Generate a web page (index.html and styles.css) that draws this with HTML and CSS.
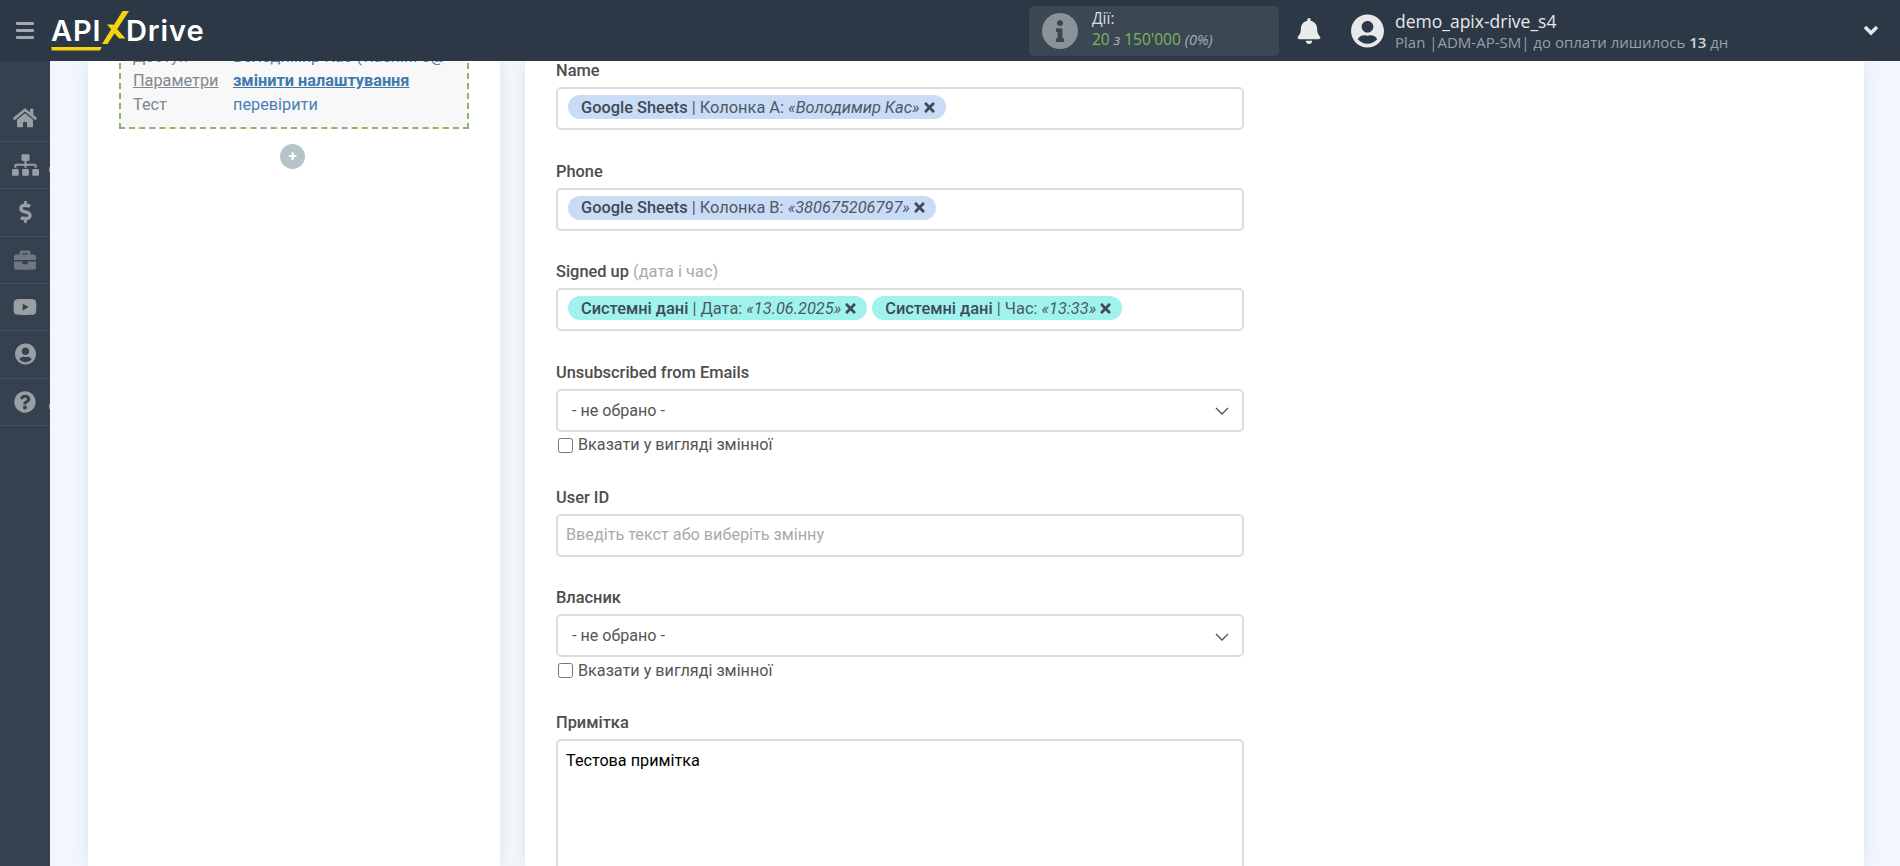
FILE: index.html
```html
<!DOCTYPE html>
<html lang="uk">
<head>
<meta charset="utf-8">
<title>ApiX-Drive</title>
<link rel="stylesheet" href="styles.css">
</head>
<body>
<svg class="defs" width="0" height="0" aria-hidden="true">
  <symbol id="i-home" viewBox="0 0 576 512"><path d="M280.37 148.26L96 300.11V464a16 16 0 0 0 16 16l112.06-.29a16 16 0 0 0 15.92-16V368a16 16 0 0 1 16-16h64a16 16 0 0 1 16 16v95.64a16 16 0 0 0 16 16.05L464 480a16 16 0 0 0 16-16V300L295.67 148.26a12.19 12.19 0 0 0-15.3 0zM571.6 251.47L488 182.56V44.05a12 12 0 0 0-12-12h-56a12 12 0 0 0-12 12v72.61L318.47 43a48 48 0 0 0-61 0L4.34 251.47a12 12 0 0 0-1.6 16.9l25.5 31A12 12 0 0 0 45.15 301l235.22-193.74a12.19 12.19 0 0 1 15.3 0L530.9 301a12 12 0 0 0 16.9-1.6l25.5-31a12 12 0 0 0-1.7-16.93z"/></symbol>
  <symbol id="i-sitemap" viewBox="0 0 640 512"><path d="M128 352H32c-17.67 0-32 14.33-32 32v96c0 17.67 14.33 32 32 32h96c17.67 0 32-14.33 32-32v-96c0-17.67-14.33-32-32-32zm-24-80h192v48h48v-48h192v48h48v-57.59c0-21.17-17.23-38.41-38.41-38.41H344v-64h40c17.67 0 32-14.33 32-32V32c0-17.67-14.33-32-32-32H256c-17.67 0-32 14.33-32 32v96c0 17.67 14.33 32 32 32h40v64H94.41C73.23 224 56 241.23 56 262.41V320h48v-48zm264 80h-96c-17.67 0-32 14.33-32 32v96c0 17.67 14.33 32 32 32h96c17.67 0 32-14.33 32-32v-96c0-17.67-14.33-32-32-32zm240 0h-96c-17.67 0-32 14.33-32 32v96c0 17.67 14.33 32 32 32h96c17.67 0 32-14.33 32-32v-96c0-17.67-14.33-32-32-32z"/></symbol>
  <symbol id="i-dollar" viewBox="0 0 288 512"><path d="M209.2 233.4l-108-31.6C88.7 198.2 80 186.5 80 173.5c0-16.3 13.2-29.5 29.5-29.5h66.3c12.2 0 24.2 3.7 34.2 10.5 6.1 4.1 14.3 3.1 19.5-2l34.8-34c7.1-6.9 6.1-18.4-1.8-24.5C238 74.8 207.4 64.1 176 64V16c0-8.8-7.2-16-16-16h-32c-8.8 0-16 7.2-16 16v48h-2.5C45.8 64-5.4 118.7.5 183.6c4.2 46.1 39.4 83.6 83.8 96.6l102.5 30c12.5 3.7 21.2 15.3 21.2 28.3 0 16.3-13.2 29.5-29.5 29.5h-66.3C100 368 88 364.3 78 357.5c-6.1-4.1-14.3-3.1-19.5 2l-34.8 34c-7.1 6.9-6.1 18.4 1.8 24.5 24.5 19.2 55.1 29.9 86.5 30v48c0 8.8 7.2 16 16 16h32c8.8 0 16-7.2 16-16v-48.2c46.6-.9 90.3-28.6 105.7-72.7 21.5-61.6-14.6-124.8-72.5-141.7z"/></symbol>
  <symbol id="i-briefcase" viewBox="0 0 512 512"><path d="M320 336c0 8.84-7.16 16-16 16h-96c-8.84 0-16-7.16-16-16v-48H0v144c0 25.6 22.4 48 48 48h416c25.6 0 48-22.4 48-48V288H320v48zm144-208h-80V80c0-25.6-22.4-48-48-48H176c-25.6 0-48 22.4-48 48v48H48c-25.6 0-48 22.4-48 48v80h512v-80c0-25.6-22.4-48-48-48zm-144 0H192V96h128v32z"/></symbol>
  <symbol id="i-youtube" viewBox="0 0 576 512"><path d="M549.655 124.083c-6.281-23.65-24.787-42.276-48.284-48.597C458.781 64 288 64 288 64S117.22 64 74.629 75.486c-23.497 6.322-42.003 24.947-48.284 48.597-11.412 42.867-11.412 132.305-11.412 132.305s0 89.438 11.412 132.305c6.281 23.65 24.787 41.5 48.284 47.821C117.22 448 288 448 288 448s170.78 0 213.371-11.486c23.497-6.321 42.003-24.171 48.284-47.821 11.412-42.867 11.412-132.305 11.412-132.305s0-89.438-11.412-132.305zm-317.51 213.508V175.185l142.739 81.205-142.739 81.201z"/></symbol>
  <symbol id="i-user" viewBox="0 0 496 512"><path d="M248 8C111 8 0 119 0 256s111 248 248 248 248-111 248-248S385 8 248 8zm0 96c48.6 0 88 39.4 88 88s-39.4 88-88 88-88-39.4-88-88 39.4-88 88-88zm0 344c-58.7 0-111.3-26.6-146.5-68.2 18.8-35.4 55.6-59.8 98.5-59.8 2.4 0 4.8.4 7.1 1.1 13 4.2 26.6 6.9 40.9 6.9 14.3 0 28-2.7 40.9-6.9 2.3-.7 4.7-1.1 7.1-1.1 42.9 0 79.7 24.4 98.5 59.8C359.3 421.4 306.7 448 248 448z"/></symbol>
  <symbol id="i-help" viewBox="0 0 512 512"><path d="M504 256c0 136.997-111.043 248-248 248S8 392.997 8 256C8 119.083 119.043 8 256 8s248 111.083 248 248zM262.655 90c-54.497 0-89.255 22.957-116.549 63.758-3.536 5.286-2.353 12.415 2.715 16.258l34.699 26.31c5.205 3.947 12.621 3.008 16.665-2.122 17.864-22.658 30.113-35.797 57.303-35.797 20.429 0 45.698 13.148 45.698 32.958 0 14.976-12.363 22.667-32.534 33.976C247.128 238.528 216 254.941 216 296v4c0 6.627 5.373 12 12 12h56c6.627 0 12-5.373 12-12v-1.333c0-28.462 83.186-29.647 83.186-106.667 0-58.002-60.165-102-116.531-102zM256 338c-25.365 0-46 20.635-46 46 0 25.364 20.635 46 46 46s46-20.636 46-46c0-25.365-20.635-46-46-46z"/></symbol>
  <symbol id="i-bell" viewBox="0 0 448 512"><path d="M224 512c35.32 0 63.97-28.65 63.97-64H160.03c0 35.35 28.65 64 63.97 64zm215.39-149.71c-19.32-20.76-55.47-51.99-55.47-154.29 0-77.7-54.48-139.9-127.94-155.16V32c0-17.67-14.32-32-31.98-32s-31.98 14.33-31.98 32v20.84C118.56 68.1 64.08 130.3 64.08 208c0 102.3-36.15 133.53-55.47 154.29-6 6.45-8.66 14.16-8.61 21.71.11 16.4 12.98 32 32.1 32h383.8c19.12 0 32-15.6 32.1-32 .05-7.55-2.61-15.27-8.61-21.71z"/></symbol>
  <symbol id="i-info" viewBox="0 0 192 512"><path d="M20 424.229h20V279.771H20c-11.046 0-20-8.954-20-20V212c0-11.046 8.954-20 20-20h112c11.046 0 20 8.954 20 20v212.229h20c11.046 0 20 8.954 20 20V492c0 11.046-8.954 20-20 20H20c-11.046 0-20-8.954-20-20v-47.771c0-11.046 8.954-20 20-20zM96 0C56.235 0 24 32.235 24 72s32.235 72 72 72 72-32.235 72-72S135.764 0 96 0z"/></symbol>
  <symbol id="i-times" viewBox="0 0 352 512"><path d="M242.72 256l100.07-100.07c12.28-12.28 12.28-32.19 0-44.48l-22.24-22.24c-12.28-12.28-32.19-12.28-44.48 0L176 189.28 75.93 89.21c-12.28-12.28-32.19-12.28-44.48 0L9.21 111.45c-12.28 12.28-12.28 32.19 0 44.48L109.28 256 9.21 356.07c-12.28 12.28-12.28 32.19 0 44.48l22.24 22.24c12.28 12.28 32.2 12.28 44.48 0L176 322.72l100.07 100.07c12.28 12.28 32.2 12.28 44.48 0l22.24-22.24c12.28-12.28 12.28-32.19 0-44.48L242.72 256z"/></symbol>
</svg>

<header class="topbar">
  <div class="burger"><span></span><span></span><span></span></div>
  <div class="logo">
    <span class="logo-api">API</span>
    <svg class="logo-x" viewBox="0 0 30 38" width="30" height="38"><path d="M20.5 2H27L5.5 35H0zM5 15.500h6L23.500 29.500H17z"/></svg>
    <span class="logo-drive">Drive</span>
  </div>
  <div class="actions">
    <div class="info-badge"><svg class="info-glyph"><use href="#i-info"/></svg></div>
    <div class="actions-text">
      <div class="actions-title">Дії:</div>
      <div class="actions-count"><b>20</b> <i class="muted">з</i> <b>150'000</b> <i class="muted">(0%)</i></div>
    </div>
  </div>
  <svg class="bell"><use href="#i-bell"/></svg>
  <svg class="avatar"><use href="#i-user"/></svg>
  <div class="account">
    <div class="account-name">demo_apix-drive_s4</div>
    <div class="account-plan">Plan |ADM-AP-SM| до оплати лишилось <strong>13</strong> дн</div>
  </div>
  <svg class="account-chevron" viewBox="0 0 16 11" width="16" height="11"><path d="M2 2l6 6 6-6"/></svg>
</header>

<div class="workspace">
  <nav class="sidebar">
    <a class="nav-item"><svg class="nav-home"><use href="#i-home"/></svg></a>
    <a class="nav-item nav-item-notch"><svg class="nav-sitemap"><use href="#i-sitemap"/></svg></a>
    <a class="nav-item"><svg class="nav-dollar"><use href="#i-dollar"/></svg></a>
    <a class="nav-item"><svg class="nav-briefcase"><use href="#i-briefcase"/></svg></a>
    <a class="nav-item"><svg class="nav-youtube"><use href="#i-youtube"/></svg></a>
    <a class="nav-item"><svg class="nav-user"><use href="#i-user"/></svg></a>
    <a class="nav-item nav-item-notch"><svg class="nav-help"><use href="#i-help"/></svg></a>
  </nav>

  <main class="content">
    <section class="card card-steps">
      <div class="step-box">
        <div class="step-row"><span class="step-key">Доступ</span><span class="step-val">Володимир Кас (vlasnik70@</span></div>
        <div class="step-row"><span class="step-key step-key-active">Параметри</span><a class="step-val step-val-active">змінити налаштування</a></div>
        <div class="step-row"><span class="step-key">Тест</span><span class="step-val">перевірити</span></div>
      </div>
      <div class="add-step">+</div>
    </section>

    <section class="card card-form">
      <form class="form">
        <div class="field">
          <div class="field-label">Name</div>
          <div class="tags">
            <span class="tag tag-blue"><span class="tag-text"><b>Google Sheets</b> | Колонка А: <i>«Володимир Кас»</i></span><svg class="tag-x"><use href="#i-times"/></svg></span>
          </div>
        </div>
        <div class="field">
          <div class="field-label">Phone</div>
          <div class="tags">
            <span class="tag tag-blue"><span class="tag-text"><b>Google Sheets</b> | Колонка B: <i>«380675206797»</i></span><svg class="tag-x"><use href="#i-times"/></svg></span>
          </div>
        </div>
        <div class="field">
          <div class="field-label">Signed up <span class="field-hint">(дата і час)</span></div>
          <div class="tags">
            <span class="tag tag-teal"><span class="tag-text"><b>Системні дані</b> | Дата: <i>«13.06.2025»</i></span><svg class="tag-x"><use href="#i-times"/></svg></span>
            <span class="tag tag-teal"><span class="tag-text"><b>Системні дані</b> | Час: <i>«13:33»</i></span><svg class="tag-x"><use href="#i-times"/></svg></span>
          </div>
        </div>
        <div class="field">
          <div class="field-label">Unsubscribed from Emails</div>
          <div class="select"><span>- не обрано -</span><svg class="select-arrow" viewBox="0 0 14 8" width="14" height="8"><path d="M1 1l6 6 6-6"/></svg></div>
          <label class="check"><input type="checkbox"><span>Вказати у вигляді змінної</span></label>
        </div>
        <div class="field">
          <div class="field-label">User ID</div>
          <input class="text-input" type="text" placeholder="Введіть текст або виберіть змінну">
        </div>
        <div class="field">
          <div class="field-label">Власник</div>
          <div class="select"><span>- не обрано -</span><svg class="select-arrow" viewBox="0 0 14 8" width="14" height="8"><path d="M1 1l6 6 6-6"/></svg></div>
          <label class="check"><input type="checkbox"><span>Вказати у вигляді змінної</span></label>
        </div>
        <div class="field">
          <div class="field-label">Примітка</div>
          <textarea class="note">Тестова примітка</textarea>
        </div>
      </form>
    </section>
  </main>
</div>
</body>
</html>
```

FILE: styles.css
```css
* { box-sizing: border-box; }

html, body { height: 100%; }

body {
  margin: 0;
  display: flex;
  flex-direction: column;
  overflow: hidden;
  background: #f3f7fd;
  font-family: Roboto, "Liberation Sans", sans-serif;
  color: #555;
}

.defs { position: absolute; }

/* Top bar */
.topbar {
  flex: none;
  height: 61px;
  display: flex;
  align-items: center;
  background: #2c3845;
  position: relative;
  z-index: 2;
  font-family: "Open Sans", "Liberation Sans", sans-serif;
}

.burger {
  width: 18px;
  margin-left: 16px;
  display: flex;
  flex-direction: column;
  gap: 3.5px;
}

.burger span {
  height: 3.5px;
  border-radius: 1px;
  background: #a3a9af;
}

.logo {
  margin-left: 17px;
  width: 160px;
  height: 40px;
  display: flex;
  align-items: center;
  font-family: Inter, "Liberation Sans", sans-serif;
  font-weight: 600;
  font-size: 29px;
  letter-spacing: 0.9px;
  color: #fff;
}

.logo-api {
  position: relative;
  width: 51px;
  line-height: 40px;
}

.logo-api::after {
  content: "";
  position: absolute;
  left: 0;
  right: 0;
  bottom: 0;
  height: 4px;
  background: #f7d210;
  clip-path: polygon(0 0, 100% 0, 96% 100%, 2% 100%);
}

.logo-x {
  flex: none;
  margin: -5px -6px 0 0;
  fill: #f7d210;
}

.logo-drive { line-height: 40px; }

.actions {
  margin-left: 818px;
  width: 250px;
  height: 50px;
  display: flex;
  align-items: center;
  padding-left: 13px;
  gap: 14px;
  background: #3b4853;
  border-radius: 5px;
}

.info-badge {
  width: 36px;
  height: 36px;
  display: flex;
  align-items: center;
  justify-content: center;
  border-radius: 50%;
  background: #8b9298;
}

.info-glyph { width: 10px; height: 22px; fill: #3b4853; }

.actions-text {
  margin-top: -4px;
  font-size: 15.5px;
  line-height: 21px;
}

.actions-title { color: #d9dee2; }

.actions-count b { font-weight: 400; color: #7eb55c; }

.muted { color: #a8b0b6; font-size: 14.5px; }

.bell {
  width: 24px;
  height: 26px;
  margin-left: 18px;
  fill: #e9ebec;
}

.avatar {
  width: 33px;
  height: 34px;
  margin-left: 30px;
  fill: #e7e9eb;
}

.account {
  margin-left: 11px;
  width: 468px;
}

.account-name { font-size: 17.5px; line-height: 23px; color: #e6e8ea; }

.account-plan { font-size: 15px; line-height: 19px; color: #97a0a8; }

.account-plan strong { color: #d2d6da; font-weight: 600; }

.account-chevron {
  fill: none;
  stroke: #e6e8ea;
  stroke-width: 3.5;
}

/* Workspace */
.workspace {
  flex: 1;
  min-height: 0;
  display: flex;
}

.sidebar {
  flex: none;
  width: 50px;
  padding-top: 33.5px;
  background: #36414f;
}

.nav-item {
  position: relative;
  height: 47.35px;
  display: flex;
  align-items: center;
  justify-content: center;
  border-bottom: 1px solid #46505d;
}

.nav-item svg { fill: #9a9fa6; }

.nav-item-notch::after {
  content: "";
  position: absolute;
  right: 0;
  top: 50%;
  width: 1.5px;
  height: 5px;
  margin-top: 2px;
  background: #8b929a;
}

.nav-home { width: 24px; height: 22px; }
.nav-sitemap { width: 27px; height: 22px; }
.nav-dollar { width: 13px; height: 22px; }
.nav-briefcase { width: 22px; height: 22px; fill: #6f7782 !important; }
.nav-youtube { width: 24px; height: 24px; }
.nav-user { width: 21px; height: 22px; }
.nav-help { width: 22px; height: 22px; }

.content {
  flex: 1;
  min-width: 0;
  display: flex;
  gap: 25px;
  padding: 0 36px 0 38px;
  overflow: hidden;
}

.card {
  background: #fff;
  box-shadow: 0 0 14px rgba(70, 80, 110, 0.13);
}

.card-steps {
  flex: none;
  width: 412px;
  padding: 0 31px;
}

.card-form {
  flex: 1;
  min-width: 0;
  padding-left: 31px;
}

/* Step summary (scrolled partly under the top bar) */
.step-box {
  margin-top: -18px;
  padding: 0 12px 10px;
  border: 2px dashed #8fb56a;
  background: #f8f8f8;
  font-size: 16.3px;
}

.step-row {
  display: flex;
  height: 24px;
  line-height: 24px;
  white-space: nowrap;
}

.step-key { flex: none; width: 100px; color: #7f8790; }

.step-key-active { text-decoration: underline; }

.step-val { color: #4a80b3; overflow: hidden; width: 216px; }

.step-val-active { font-weight: 700; color: #3f79ad; text-decoration: underline; }

.add-step {
  width: 25px;
  height: 25px;
  margin: 15px 0 0 161px;
  border-radius: 50%;
  background: #b5c5c7;
  color: #fff;
  font-size: 15px;
  font-weight: 700;
  line-height: 24px;
  text-align: center;
}

/* Form */
.form {
  width: 688px;
  margin-top: -1px;
}

.field { margin-bottom: 30.5px; }

.field-label {
  height: 19px;
  margin-bottom: 8px;
  padding-top: 1px;
  font-size: 16.4px;
  line-height: 19px;
  font-weight: 500;
  color: #4d4d4d;
}

.field-hint { font-weight: 400; color: #aaa; }

.tags {
  height: 43px;
  display: flex;
  gap: 5px;
  padding: 6px 10px;
  border: 2px solid #dcdcdc;
  border-radius: 5px;
  background: #fff;
}

.tag {
  height: 24px;
  display: inline-flex;
  align-items: center;
  gap: 4px;
  padding: 0 11px 0 13px;
  border-radius: 12px;
  font-size: 16.4px;
  line-height: 24px;
  color: #4d5966;
  white-space: nowrap;
}

.tag-text { padding-top: 1px; }

.tag b { font-weight: 500; color: #3f4a56; }

.tag-blue { background: #c9dcf5; }

.tag-teal { background: #9ff3ec; }

.tag-x { width: 11px; height: 15px; fill: #3e4a57; }

.select {
  height: 43px;
  display: flex;
  align-items: center;
  justify-content: space-between;
  padding: 0 13px 0 14px;
  border: 2px solid #dcdcdc;
  border-radius: 5px;
  background: #fff;
  font-size: 16.1px;
  color: #555;
}

.select-arrow {
  margin-top: 2px;
  fill: none;
  stroke: #555;
  stroke-width: 1.4;
}

.check {
  height: 24.5px;
  display: flex;
  align-items: center;
  gap: 5px;
  padding-top: 2px;
  font-size: 16.2px;
  color: #555;
}

.check input {
  width: 15px;
  height: 15px;
  margin: 1px 0 0 2px;
}

.text-input {
  display: block;
  width: 100%;
  height: 43px;
  padding: 0 8px 2px;
  border: 2px solid #dcdcdc;
  border-radius: 5px;
  outline: none;
  font-family: inherit;
  font-size: 16.2px;
}

.text-input::placeholder { color: #aaa; opacity: 1; }

.note {
  display: block;
  width: 100%;
  height: 240px;
  padding: 10px 8px;
  border: 2px solid #dcdcdc;
  border-radius: 5px;
  outline: none;
  resize: none;
  font-family: inherit;
  font-size: 16.2px;
  line-height: 19px;
  color: #000;
}
```
